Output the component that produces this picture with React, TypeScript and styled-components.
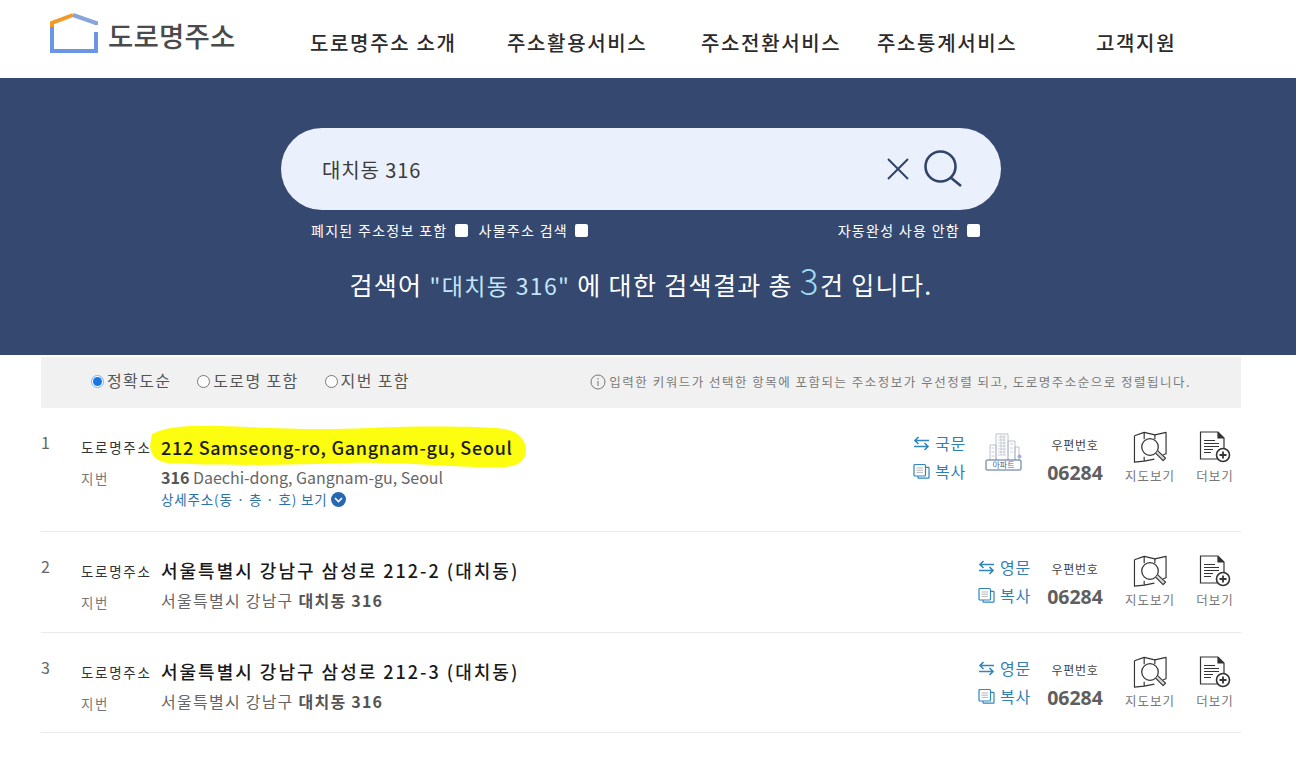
import React from "react";
import styled, { createGlobalStyle } from "styled-components";

const Global = createGlobalStyle`
  html, body { margin: 0; padding: 0; background: #fff; }
  body { font-family: "Noto Sans CJK KR", "Noto Sans", sans-serif; color: #222; overflow: hidden; }
  * { box-sizing: border-box; }
`;

const Page = styled.div`width: 1296px; height: 776px; overflow: hidden;`;

const Header = styled.header`
  height: 78px;
  display: flex;
  align-items: flex-start;
  padding-left: 49px;
`;
const Logo = styled.div`
  width: 261px;
  display: flex;
  align-items: flex-start;
  padding-top: 12px;
  gap: 10px;
`;
const LogoText = styled.span`
  font-size: 27.5px;
  line-height: 48px;
  margin-top: -1px;
  font-weight: 500;
  color: #4a4a4a;
  letter-spacing: 0.2px;
`;
const Nav = styled.nav`
  display: grid;
  grid-template-columns: 197px 194px 176px 219px auto;
  padding-top: 28px;
`;
const NavItem = styled.a`
  font-size: 20px;
  line-height: 30px;
  font-weight: 500;
  color: #2b2b2b;
  white-space: nowrap;
  letter-spacing: 1.65px;
`;

const Hero = styled.section`
  height: 277px;
  background: #354870;
  display: flex;
  flex-direction: column;
  align-items: center;
  padding: 50px 14px 0 0;
`;
const SearchBar = styled.div`
  width: 720px;
  height: 82px;
  border-radius: 41px;
  background: #ebf1fc;
  display: flex;
  align-items: center;
  padding: 0 39px 0 41px;
`;
const Query = styled.span`
  flex: 1;
  font-size: 20px;
  color: #3c3c3c;
  letter-spacing: 0.9px;
`;
const SearchIcons = styled.div`display: flex; align-items: center; gap: 13px;`;
const Options = styled.div`
  width: 720px;
  height: 40px;
  display: flex;
  align-items: center;
  padding: 0 21px 0 30px;
  color: #fff;
  font-size: 14px;
`;
const Option = styled.label<{ $push?: boolean }>`
  display: flex;
  align-items: center;
  gap: 7px;
  margin-left: ${(p) => (p.$push ? "auto" : "0")};
  margin-right: 11px;
  &:last-child { margin-right: 0; }
  letter-spacing: 1.3px;
`;
const Check = styled.span`
  width: 13px; height: 13px; background: #fff; border-radius: 2px; display: block;
`;
const Summary = styled.p`
  margin: 15px 0 0;
  color: #fff;
  font-size: 25px;
  line-height: 38px;
  letter-spacing: 1.35px;
  white-space: nowrap;
`;
const Quoted = styled.span`color: #c1e6fb; font-size: 23px;`;
const Count = styled.span`color: #9fdcf5; font-size: 35px; line-height: 30px; font-weight: 300;`;

const Content = styled.main`
  width: 1200px;
  margin: 2px 0 0 41px;
`;
const FilterBar = styled.div`
  height: 51px;
  background: #f1f1f1;
  display: flex;
  align-items: center;
  padding: 0 50px 5px 50px;
`;
const Radio = styled.label`
  display: flex;
  align-items: center;
  gap: 3px;
  font-size: 16px;
  color: #555;
  margin-right: 26px;
  letter-spacing: 1.35px;
`;
const RadioDot = styled.span<{ $on?: boolean }>`
  width: 13px;
  height: 13px;
  border-radius: 50%;
  background: #fff;
  border: 1px solid ${(p) => (p.$on ? "#7fb0e8" : "#777")};
  display: flex;
  align-items: center;
  justify-content: center;
  margin-top: 2px;
  &::after {
    content: "";
    display: ${(p) => (p.$on ? "block" : "none")};
    width: 9px; height: 9px; border-radius: 50%; background: #1976e0;
  }
`;
const Hint = styled.div`
  margin-left: auto;
  margin-top: 3px;
  display: flex;
  align-items: center;
  gap: 3px;
  font-size: 12.5px;
  color: #7a7a7a;
  letter-spacing: 1.5px;
  white-space: nowrap;
`;

const Row = styled.article<{ $h: number }>`
  height: ${(p) => p.$h}px;
  border-bottom: 1px solid #e9e9e9;
  display: flex;
  align-items: flex-start;
  padding-top: 24px;
`;
const Rank = styled.div`
  width: 40px;
  font-size: 16px;
  line-height: 20px;
  color: #666;
`;
const Labels = styled.div`
  width: 80px;
  display: flex;
  flex-direction: column;
  padding-top: 5px;
  font-size: 13.5px;
  line-height: 20px;
  letter-spacing: 1.7px;
`;
const RoadLabel = styled.span`color: #333; white-space: nowrap;`;
const LotLabel = styled.span`color: #777; margin-top: 11px;`;
const Address = styled.div`
  flex: 1;
  display: flex;
  flex-direction: column;
  align-items: flex-start;
  position: relative;
`;
const Highlight = styled.svg`
  position: absolute;
  left: -12px;
  top: -8px;
`;
const RoadAddress = styled.div<{ $wide?: boolean }>`
  position: relative;
  font-size: 18px;
  line-height: 28px;
  font-weight: 500;
  color: #1a1a1a;
  letter-spacing: ${(p) => (p.$wide ? "2px" : "0.7px")};
  margin-top: ${(p) => (p.$wide ? "0" : "1px")};
  white-space: nowrap;
`;
const LotAddress = styled.div<{ $wide?: boolean }>`
  font-size: 16px;
  line-height: 24px;
  margin-top: 4px;
  color: #666;
  white-space: nowrap;
  letter-spacing: ${(p) => (p.$wide ? "1.25px" : "0")};
  b { font-weight: 700; color: #555; }
`;
const Detail = styled.div`
  display: flex;
  align-items: center;
  gap: 4px;
  font-size: 13.5px;
  line-height: 18px;
  margin-top: 1px;
  color: #2c72a8;
  white-space: nowrap;
  letter-spacing: 0.85px;
`;
const Actions = styled.div`
  display: flex;
  align-items: flex-start;
  margin-top: -1px;
`;
const LinkCol = styled.div`
  display: flex;
  flex-direction: column;
  gap: 4px;
  width: 54px;
  margin-right: 13px;
`;
const ActionLink = styled.div`
  display: flex;
  align-items: center;
  gap: 5px;
  font-size: 16px;
  line-height: 24px;
  color: #2f7fb5;
  white-space: nowrap;
  letter-spacing: 0.9px;
`;
const Building = styled.div`
  width: 38px;
  margin: 2px 22px 0 5px;
`;
const ZipCol = styled.div`
  width: 60px;
  margin-right: 19px;
  display: flex;
  flex-direction: column;
  align-items: center;
`;
const ZipLabel = styled.span`
  font-size: 12px;
  line-height: 20px;
  margin-top: 4px;
  color: #444;
  white-space: nowrap;
  letter-spacing: 0.7px;
`;
const ZipCode = styled.span`
  font-family: "Open Sans", "Noto Sans", sans-serif;
  font-size: 19.5px;
  line-height: 24px;
  margin-top: 6px;
  font-weight: 700;
  color: #5f5f5f;
`;
const Tool = styled.div<{ $gap?: number }>`
  width: 52px;
  margin-right: ${(p) => p.$gap ?? 0}px;
  display: flex;
  flex-direction: column;
  align-items: center;
  font-size: 12.5px;
  line-height: 18px;
  color: #777;
  white-space: nowrap;
  letter-spacing: 1px;
  svg { margin-bottom: 4px; }
`;

const Swap = () => (
  <svg width="17" height="15" viewBox="0 0 17 15" fill="none" stroke="#2f86bd" strokeWidth="1.6">
    <path d="M16 4.500H2M5.500 1 2 4.500 5.500 8M1 10.500h14M11.500 7l3.500 3.500L11.500 14" />
  </svg>
);
const Copy = () => (
  <svg width="17" height="16" viewBox="0 0 17 16" fill="none" stroke="#2f86bd" strokeWidth="1.2">
    <path d="M5 13v1.500a.6.6 0 0 0 .6.6h9.800a.6.6 0 0 0 .6-.6V5a.6.6 0 0 0-.6-.6H13" />
    <rect x="1" y="1.500" width="11.500" height="11.500" rx="1" />
    <path d="M3.500 5h6.500M3.500 7.200h6.500M3.500 9.400h6.500" strokeWidth="0.7" stroke="#999" />
  </svg>
);
const MapIcon = () => (
  <svg width="35" height="32" viewBox="0 0 36 32" fill="none" stroke="#333" strokeWidth="1.2" strokeLinejoin="round">
    <path d="M1.500 4.500 11.500 1l11 2.500L34 1v22l-3 1M22 28.500l-10.500 2-10 1V4.500" />
    <path d="M11.500 1v7M11.500 26v4.500M22.500 3.500V8" />
    <circle cx="17.500" cy="16" r="8.500" strokeWidth="1.300" />
    <path d="M23.500 22.500 31 30l2.500-2.500L25.500 20" fill="#d9d9d9" />
  </svg>
);
const DocIcon = () => (
  <svg width="32" height="32" viewBox="0 0 32 32" fill="none" stroke="#333" strokeWidth="1.200">
    <path d="M18.500 28H1.500V1H19l6 6v11" />
    <path d="M19 1v6h6" fill="#333" />
    <path d="M5 9.500h11M5 12.500h15M5 15.500h15M5 18.500h9M5 21.500h7" strokeWidth="1" />
    <circle cx="24" cy="24" r="6.500" strokeWidth="1.600" />
    <path d="M20.500 24h7M24 20.500v7" strokeWidth="1.800" />
  </svg>
);
const BuildingIcon = () => (
  <svg width="38" height="38" viewBox="0 0 38 38" fill="none">
    <g stroke="#aab4c4" strokeWidth="0.8">
      <path d="M5 27V12h6v15M11 27V1h12v26M23 27V8h7v19M30 27V14h4v13" />
      <path d="M13 4h8M13 7h8M13 10h8M13 13h8M13 16h8M13 19h8M13 22h8M16 2v20M19 2v20M6.500 15h3M6.500 19h3M6.500 23h3M25 11h3M25 15h3M25 19h3" strokeWidth="0.6" />
    </g>
    <circle cx="34.500" cy="23.500" r="2" fill="#a6acea" />
    <rect x="1" y="27" width="35" height="10" rx="1" fill="#fff" stroke="#4d6a92" />
    <text x="18.500" y="35" textAnchor="middle" fontSize="8" fill="#4d6a92" fontFamily="Noto Sans CJK KR">아파트</text>
  </svg>
);

type Item = {
  n: number; h: number; road: string; lot: React.ReactNode; lang: string;
  highlight?: boolean; detail?: boolean; apt?: boolean; ko?: boolean;
};
const items: Item[] = [
  { n: 1, h: 124, road: "212 Samseong-ro, Gangnam-gu, Seoul", lot: <><b>316</b> Daechi-dong, Gangnam-gu, Seoul</>, lang: "국문", highlight: true, detail: true, apt: true },
  { n: 2, h: 101, road: "서울특별시 강남구 삼성로 212-2 (대치동)", lot: <>서울특별시 강남구 <b>대치동 316</b></>, lang: "영문", ko: true },
  { n: 3, h: 100, road: "서울특별시 강남구 삼성로 212-3 (대치동)", lot: <>서울특별시 강남구 <b>대치동 316</b></>, lang: "영문", ko: true },
];

export default function App() {
  return (
    <Page>
      <Global />
      <Header>
        <Logo>
          <svg width="49" height="41" viewBox="0 0 49 41" fill="none" strokeWidth="4">
            <path d="M3 14V39H47V20" stroke="#6b96e6" />
            <path d="M3 15V11L24 3" stroke="#f29a26" />
            <path d="M24 3 47 11v2" stroke="#8aa4d8" />
          </svg>
          <LogoText>도로명주소</LogoText>
        </Logo>
        <Nav>
          {["도로명주소 소개", "주소활용서비스", "주소전환서비스", "주소통계서비스", "고객지원"].map((t) => (
            <NavItem key={t}>{t}</NavItem>
          ))}
        </Nav>
      </Header>
      <Hero>
        <SearchBar>
          <Query>대치동 316</Query>
          <SearchIcons>
            <svg width="26" height="26" viewBox="0 0 26 26" stroke="#2f4468" strokeWidth="2" fill="none">
              <path d="M3 3 23 23M23 3 3 23" />
            </svg>
            <svg width="38" height="38" viewBox="0 0 38 38" stroke="#2f4468" strokeWidth="2.600" fill="none">
              <circle cx="16.500" cy="16.500" r="15" />
              <path d="M26 27l11 9" />
            </svg>
          </SearchIcons>
        </SearchBar>
        <Options>
          <Option>폐지된 주소정보 포함 <Check /></Option>
          <Option>사물주소 검색 <Check /></Option>
          <Option $push>자동완성 사용 안함 <Check /></Option>
        </Options>
        <Summary>
          검색어 <Quoted>"대치동 316"</Quoted> 에 대한 검색결과 총 <Count>3</Count>건 입니다.
        </Summary>
      </Hero>
      <Content>
        <FilterBar>
          <Radio><RadioDot $on />정확도순</Radio>
          <Radio><RadioDot />도로명 포함</Radio>
          <Radio><RadioDot />지번 포함</Radio>
          <Hint>
            <svg width="16" height="16" viewBox="0 0 16 16" fill="none" stroke="#777">
              <circle cx="8" cy="8" r="7" />
              <path d="M8 7v5M8 4v1.500" />
            </svg>
            입력한 키워드가 선택한 항목에 포함되는 주소정보가 우선정렬 되고, 도로명주소순으로 정렬됩니다.
          </Hint>
        </FilterBar>
        {items.map((it) => (
          <Row key={it.n} $h={it.h}>
            <Rank>{it.n}</Rank>
            <Labels>
              <RoadLabel>도로명주소</RoadLabel>
              <LotLabel>지번</LotLabel>
            </Labels>
            <Address>
              {it.highlight && (
                <Highlight width="378" height="44" viewBox="0 0 378 44">
                  <path d="M3 10C20 2 40 1 70 2c40 1 90 5 150 2 50-2 110-2 135 1 13 2 21 9 22 20 0 10-5 17-22 18-55 1-95-6-155-4-60 2-130 3-180 0C8 38 2 32 1 22Z" fill="#fdfd10" />
                </Highlight>
              )}
              <RoadAddress $wide={it.ko}>{it.road}</RoadAddress>
              <LotAddress $wide={it.ko}>{it.lot}</LotAddress>
              {it.detail && (
                <Detail>
                  상세주소(동 · 층 · 호) 보기
                  <svg width="15" height="15" viewBox="0 0 15 15">
                    <circle cx="7.500" cy="7.500" r="7.500" fill="#2569b3" />
                    <path d="M4 6l3.500 3.500L11 6" stroke="#fff" strokeWidth="1.600" fill="none" />
                  </svg>
                </Detail>
              )}
            </Address>
            <Actions>
              <LinkCol>
                <ActionLink><Swap />{it.lang}</ActionLink>
                <ActionLink><Copy />복사</ActionLink>
              </LinkCol>
              {it.apt && <Building><BuildingIcon /></Building>}
              <ZipCol>
                <ZipLabel>우편번호</ZipLabel>
                <ZipCode>06284</ZipCode>
              </ZipCol>
              <Tool $gap={13}><MapIcon />지도보기</Tool>
              <Tool><DocIcon />더보기</Tool>
            </Actions>
          </Row>
        ))}
      </Content>
    </Page>
  );
}
